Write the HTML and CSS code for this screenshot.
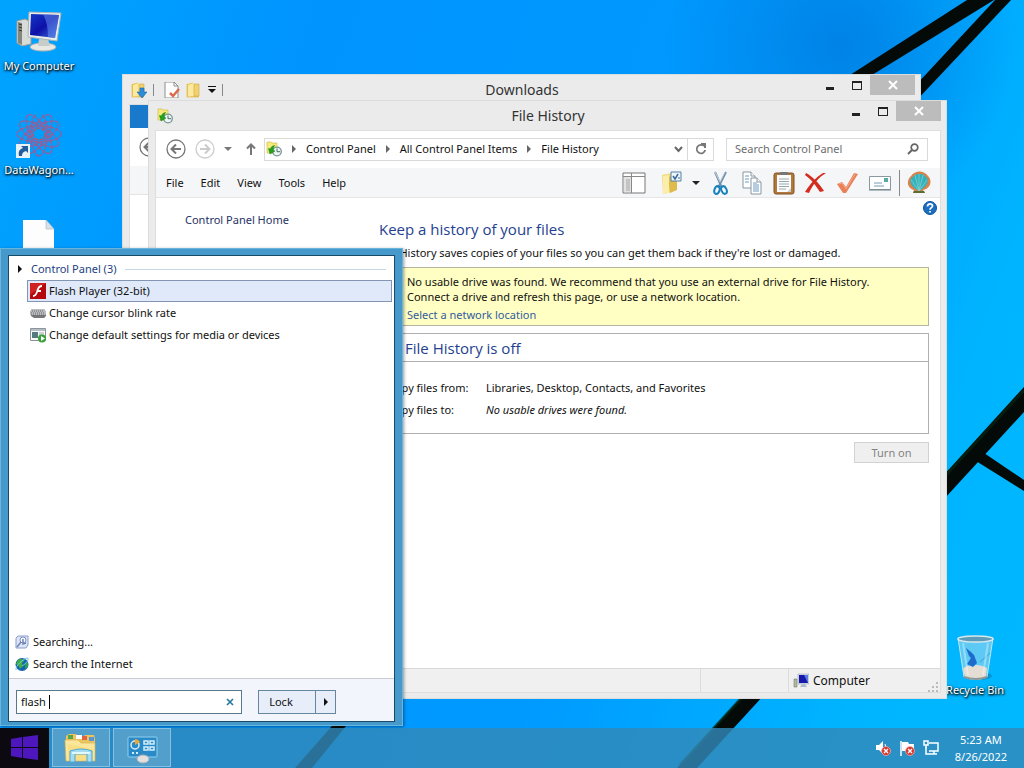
FILE: index.html
```html
<!DOCTYPE html>
<html lang="en">
<head>
    <meta charset="UTF-8">
    <meta name="viewport" content="width=device-width, initial-scale=1.0">
    <title>File History</title>
    <link rel="stylesheet" href="styles.css">
</head>
<body>

<svg class="defs" aria-hidden="true">
    <symbol id="ic-history" viewBox="0 0 16 16">
        <path d="M1 1h4l1 1h5v10H1z" fill="#f6ea7c" stroke="#d2bd45" stroke-width=".7"/>
        <circle cx="11" cy="10.500" r="4.300" fill="#edf4f4" stroke="#769794" stroke-width="1.300"/>
        <path d="M11 7.500v3.200h3" fill="none" stroke="#4c6a68"/>
        <path d="M8.500 4.500C6 5 5 6 4.500 8L2.500 7.500 4 13l5-3-2-.8C7 7.500 7.500 6 8.500 4.500z" fill="#22a51c" stroke="#0d7a10" stroke-width=".5"/>
    </symbol>
    <symbol id="ic-folder" viewBox="0 0 16 16">
        <path d="M1 2l6-1.500V2h6v13H1z" fill="#e8c456"/>
        <path d="M2 3l6-2v13l-6 1z" fill="#fbe9a0"/>
        <path d="M8 2h5v12H8z" fill="#f1d26f" stroke="#cda840" stroke-width=".6"/>
        <path d="M1 2v13h12" fill="none" stroke="#dcb84c" stroke-width=".7"/>
    </symbol>
    <symbol id="ic-back" viewBox="0 0 20 20">
        <circle cx="10" cy="10" r="9" fill="none" stroke="currentColor" stroke-width="1.300"/>
        <path d="M15 10H6M10 5.500L5.500 10l4.500 4.500" fill="none" stroke="currentColor" stroke-width="2"/>
    </symbol>
    <symbol id="ic-badx" viewBox="0 0 10 10">
        <circle cx="5" cy="5" r="4.500" fill="#d8372f" stroke="#f3b9b4" stroke-width=".7"/>
        <path d="M3 3l4 4M7 3L3 7" stroke="#fff" stroke-width="1.400"/>
    </symbol>
</svg>

<main class="desktop">
    <svg class="wallpaper" viewBox="0 0 1024 768" preserveAspectRatio="none" aria-hidden="true">
        <g fill="#030a08">
            <path d="M967 0h27L872 75h-22z"/>
            <path d="M995 0h16L915 102v-16z"/>
            <path d="M1024 387v25L697 768h-20z"/>
            <path d="M976 461l8-8 40 27v11z"/>
            <path d="M360 694h12L312 768h-17z"/>
        </g>
        <path d="M1024 390L680 765" stroke="#082712" stroke-width="3" opacity=".7"/>
    </svg>

    <!-- desktop icons -->
    <div class="shortcut my-computer">
        <svg width="48" height="48" viewBox="0 0 48 48">
            <path d="M2 11l8-2 6 3v22l-9 2-5-3z" fill="#d9dbd8" stroke="#9a9d9a"/>
            <path d="M3 12l4 1v22l-4-2z" fill="#85877f"/>
            <path d="M4 14l3 1M4 17l3 1M4 20l3 1" stroke="#37372d"/>
            <ellipse cx="28" cy="37" rx="13" ry="4" fill="#e8e9e5" stroke="#b3b6b0"/>
            <path d="M24 29h9l2 7H23z" fill="#c9cdc9"/>
            <path d="M14 2l32 1-4 28-29-4z" fill="#e9eee9" stroke="#a9b4b8"/>
            <path d="M16 4l28 1-4 23-25-3z" fill="url(#screen)"/>
            <path d="M28 4l16 1-4 23-7-1c0-8-1-15-5-23z" fill="#628dec" opacity=".55"/>
            <defs><linearGradient id="screen" x2="1" y2="1"><stop stop-color="#1539c8"/><stop offset=".5" stop-color="#0d10a8"/><stop offset="1" stop-color="#4178e3"/></linearGradient></defs>
        </svg>
        <span>My Computer</span>
    </div>
    <div class="shortcut datawagon">
        <svg width="48" height="48" viewBox="0 0 48 48">
            <g fill="none" stroke="#8c629f" stroke-width="1.500" stroke-dasharray="4 1" transform="translate(24 20)">
                <ellipse rx="22" ry="8"/><ellipse rx="22" ry="8" transform="rotate(30)"/>
                <ellipse rx="22" ry="8" transform="rotate(60)"/><ellipse rx="22" ry="8" transform="rotate(90)"/>
                <ellipse rx="22" ry="8" transform="rotate(120)"/><ellipse rx="22" ry="8" transform="rotate(150)"/>
                <circle r="12"/><circle r="6" stroke="#bb506f"/>
            </g>
            <path d="M1 30h14v14H1z" fill="#e9f2f8"/>
            <path d="M4 42c-1-5 1-7 4-8l-2-2h7v7l-2-2c-3 1-4 2-4 5z" fill="#215c9b"/>
        </svg>
        <span>DataWagon...</span>
    </div>
    <div class="shortcut blank-file">
        <svg width="48" height="48" viewBox="0 0 48 48">
            <path d="M8 3h23l8 9v36H8z" fill="#fdfdfd"/>
            <path d="M31 3v9h8z" fill="#d9e1e8" stroke="#a4b4c0" stroke-width=".6"/>
        </svg>
    </div>
    <div class="shortcut recycle">
        <svg width="48" height="48" viewBox="0 0 48 48">
            <ellipse cx="27" cy="42" rx="14" ry="4" fill="#16608c" opacity=".4"/>
            <path d="M7 4h35l-6 39q-11 5-23 0z" fill="#b8ddec" fill-opacity=".5" stroke="#c4e5ef"/>
            <path d="M12 35q3-4 9-3 6-3 15 2l-1 9q-11 4-21 0z" fill="#e3ddd3"/>
            <path d="M15 14l3 8 2 2-4 6 6 3 4-4-3-8-3-3z" fill="#1d6ccb"/>
            <path d="M29 28l10-9" stroke="#4b9cd1"/>
            <path d="M12 9l5 32M37 9l-5 32" stroke="#fff" opacity=".35" stroke-width="2"/>
            <ellipse cx="24.500" cy="5" rx="17.500" ry="3" fill="#5d9cb9" stroke="#d5e6ec" stroke-width="1.500"/>
            <path d="M13 43q12 4 23 0" fill="none" stroke="#8b989a" stroke-width="2"/>
        </svg>
        <span>Recycle Bin</span>
    </div>

    <!-- window behind -->
    <section class="window downloads">
        <header class="titlebar">
            <div class="quick">
                <svg width="16" height="16"><use href="#ic-folder"/><path d="M9 6h4v4h3l-5 6-5-6h3z" fill="#2e8bd6" stroke="#1769b0" stroke-width=".6"/></svg>
                <i class="sep"></i>
                <svg class="sheet" width="16" height="16" viewBox="0 0 16 16"><path d="M1 0h9l4 4v12H1z" fill="#fff" stroke="#8e8e8e"/><path d="M10 0v4h4" fill="none" stroke="#8e8e8e"/><path d="M6 11l3 3 6-7" fill="none" stroke="#dc6a4c" stroke-width="2.500"/></svg>
                <svg width="16" height="16"><use href="#ic-folder"/></svg>
                <svg width="8" height="8" viewBox="0 0 8 8"><path d="M0 0h8v1H0zM0 3h8L4 7z" fill="#111"/></svg>
                <i class="sep"></i>
            </div>
            <h2>Downloads</h2>
            <div class="controls">
                <button aria-label="Minimize"><i class="min"></i></button>
                <button aria-label="Maximize"><i class="max"></i></button>
                <button class="close" aria-label="Close"><svg width="10" height="10" viewBox="0 0 10 10"><path d="M1 1l8 8M9 1L1 9" stroke="#fff" stroke-width="2"/></svg></button>
            </div>
        </header>
        <div class="pane">
            <div class="ribbon-tab"></div>
            <div class="pane-nav"><svg width="20" height="20"><use href="#ic-back"/></svg></div>
            <div class="pane-tools"></div>
        </div>
    </section>

    <section class="window history">
        <header class="titlebar">
            <div class="quick"><svg width="16" height="16"><use href="#ic-history"/></svg></div>
            <h1>File History</h1>
            <div class="controls">
                <button aria-label="Minimize"><i class="min"></i></button>
                <button aria-label="Maximize"><i class="max"></i></button>
                <button class="close" aria-label="Close"><svg width="10" height="10" viewBox="0 0 10 10"><path d="M1 1l8 8M9 1L1 9" stroke="#fff" stroke-width="2"/></svg></button>
            </div>
        </header>
        <div class="pane">
            <nav class="address-row">
                <button class="nav-btn" aria-label="Back"><svg width="20" height="20"><use href="#ic-back"/></svg></button>
                <button class="nav-btn forward" aria-label="Forward"><svg width="20" height="20"><use href="#ic-back"/></svg></button>
                <button class="recent" aria-label="Recent pages"><i class="down"></i></button>
                <button class="up" aria-label="Up"><svg width="10" height="12" viewBox="0 0 10 12"><path d="M5 12V2M1 5.500L5 1.500l4 4" fill="none" stroke="#777" stroke-width="2"/></svg></button>
                <div class="address">
                    <svg width="16" height="16"><use href="#ic-history"/></svg>
                    <i class="right"></i><a href="#">Control Panel</a>
                    <i class="right"></i><a href="#">All Control Panel Items</a>
                    <i class="right"></i><a href="#">File History</a>
                    <button class="drop" aria-label="Previous locations"><svg width="9" height="7" viewBox="0 0 9 7"><path d="M1 1l3.500 4L8 1" fill="none" stroke="#666" stroke-width="2"/></svg></button>
                    <button class="refresh" aria-label="Refresh"><svg width="12" height="12" viewBox="0 0 12 12"><path d="M9 3a4.300 4.300 0 1 0 1.200 4" fill="none" stroke="#777" stroke-width="1.700"/><path d="M6 0h5v5H9V2H6z" fill="#777"/></svg></button>
                </div>
                <div class="search">
                    <input type="text" placeholder="Search Control Panel" aria-label="Search Control Panel">
                    <svg width="12" height="12" viewBox="0 0 12 12"><circle cx="7.500" cy="4.500" r="3.300" fill="none" stroke="#666" stroke-width="1.700"/><path d="M5 7l-4 4" stroke="#666" stroke-width="2"/></svg>
                </div>
            </nav>
            <div class="menu-row">
                <button>File</button><button>Edit</button><button>View</button><button>Tools</button><button>Help</button>
                <div class="tools">
                    <svg width="24" height="24" viewBox="0 0 24 24"><path d="M1 2h22v20H1z" fill="#fff" stroke="#777"/><path d="M1 5.500h22M9.500 2v20" stroke="#888"/><path d="M2 6h7v15H2z" fill="#e2e2e2"/><path d="M4 8h4v12H4z" fill="#c4c4c4"/></svg>
                    <svg class="props" width="24" height="24" viewBox="0 0 24 24"><path d="M2 4l10-2v19l-9 2z" fill="#f1d978"/><path d="M8 6l9-2v15l-7 3z" fill="#dfbb4b"/><path d="M3 5l6-1v18l-6 1z" fill="#fbedac"/><path d="M11 1h10v9H11z" fill="#edf6fc" stroke="#537fa4"/><path d="M13 5l2 3 3-5" fill="none" stroke="#386b9a" stroke-width="1.500"/><path d="M18 7h2" stroke="#386b9a"/></svg>
                    <i class="down dark"></i>
                    <svg class="cut" width="24" height="24" viewBox="0 0 24 24"><path d="M7 1l7 16M18 1l-8 16" stroke="#6f8fac" stroke-width="2"/><path d="M7 1l5 10 5-10" fill="none" stroke="#c1d0da"/><g fill="none" stroke="#1682bd" stroke-width="2"><ellipse cx="9" cy="19" rx="2.500" ry="4" transform="rotate(20 9 19)"/><ellipse cx="16" cy="19" rx="2.500" ry="4" transform="rotate(-25 16 19)"/></g></svg>
                    <svg width="24" height="24" viewBox="0 0 24 24"><g fill="#fff" stroke="#8797a0"><path d="M3 1h8l4 4v12H3z"/><path d="M11 1v4h4"/><path d="M11 7h6l4 4v12H11z"/><path d="M17 7v4h4"/></g><path d="M5 5h4M5 8h4M5 11h4M13 12h4M13 14h6M13 16h6M13 18h6M13 20h6" stroke="#6a9bc0"/></svg>
                    <svg width="24" height="24" viewBox="0 0 24 24"><rect x="2" y="2" width="20" height="21" rx="2" fill="#b3783b" stroke="#805225"/><path d="M5 4h14v17H5z" fill="#fdfdfb"/><path d="M8 1h8v3H8z" fill="#777"/><path d="M7 8h10M7 10.500h10M7 13h10M7 15.500h10M7 18h7" stroke="#95a8b4"/><path d="M15 21l4-4v4z" fill="#c7cfd2"/></svg>
                    <svg width="24" height="24" viewBox="0 0 24 24"><path d="M2 2c6 3 13 10 18 18l-4 1C12 15 7 8 1 4zM22 2C15 6 9 13 5 22l-4-1C6 13 12 6 19 2z" fill="#d52c20"/></svg>
                    <svg width="24" height="24" viewBox="0 0 24 24"><path d="M1 13l5-2 4 5L18 2l4 1-12 19H7z" fill="#ea8058"/><path d="M3 13l3-1 4 6L19 3" fill="none" stroke="#f6a78a"/></svg>
                    <svg width="24" height="24" viewBox="0 0 24 24"><path d="M1.500 5.500h21v13h-21z" fill="#fff" stroke="#8a989f"/><path d="M1 19h22" stroke="#71818a"/><path d="M16 7h4v4h-4z" fill="#58aaa5"/><path d="M6 12h8M6 15h10" stroke="#739ab7"/></svg>
                    <i class="sep"></i>
                    <svg width="24" height="24" viewBox="0 0 24 24"><path d="M7 19C0 17-1 10 4 5c4-6 13-6 17 0 5 5 2 13-5 14l2 3H6z" fill="#da8248"/><path d="M12 20C2 15 1 8 7 5c3-3 8-3 11 0 6 4 2 11-6 15z" fill="#35b1bd"/><path d="M12 20L4 9M12 20L8 4M12 20V3M12 20l4-16M12 20l8-11" stroke="#7fd0cb" stroke-width=".8"/><path d="M7 20h10l1 2H6z" fill="#5a6d34"/></svg>
                </div>
            </div>
            <div class="body">
                <aside><a href="#">Control Panel Home</a></aside>
                <article>
                    <h2>Keep a history of your files</h2>
                    <p>File History saves copies of your files so you can get them back if they're lost or damaged.</p>
                    <div class="notice">
                        <p>No usable drive was found. We recommend that you use an external drive for File History.<br>Connect a drive and refresh this page, or use a network location.</p>
                        <a href="#">Select a network location</a>
                    </div>
                    <div class="status">
                        <h3>File History is off</h3>
                        <dl>
                            <dt>Copy files from:</dt><dd>Libraries, Desktop, Contacts, and Favorites</dd>
                            <dt>Copy files to:</dt><dd><em>No usable drives were found.</em></dd>
                        </dl>
                    </div>
                    <button class="turn-on" disabled>Turn on</button>
                </article>
                <button class="help" aria-label="Help"><svg width="14" height="14" viewBox="0 0 14 14"><circle cx="7" cy="7" r="6.500" fill="#1b6fc0" stroke="#11529a"/><path d="M4.500 5.500C4.500 2 9.800 2.200 9.500 5.200 9.300 6.700 7 6.700 7 8.700M7 10v1.500" fill="none" stroke="#fff" stroke-width="1.700"/></svg></button>
            </div>
            <footer class="statusbar">
                <div class="cell"></div>
                <div class="cell small"></div>
                <div class="cell place">
                    <svg width="16" height="16" viewBox="0 0 16 16"><path d="M1 6h3v8H1z" fill="#afb99d" stroke="#77806b" stroke-width=".6"/><path d="M5 1h11v10H5z" fill="#d8deeb" stroke="#8d9ab0" stroke-width=".5"/><path d="M6 2h9v8H6z" fill="#1618aa"/><path d="M11 2h4v8z" fill="#587be3"/><path d="M9 11h3l2 3H7z" fill="#b0bbca"/></svg>
                    <span>Computer</span>
                    <svg class="grip" width="10" height="10" viewBox="0 0 10 10"><path d="M8 0h2v2H8zM4 4h2v2H4zM8 4h2v2H8zM0 8h2v2H0zM4 8h2v2H4zM8 8h2v2H8z" fill="#bbb"/></svg>
                </div>
            </footer>
        </div>
    </section>

    <!-- start menu search results -->
    <section class="start-menu">
        <div class="start-inner">
            <div class="results">
                <h2><i class="right"></i><span>Control Panel (3)</span></h2>
                <a href="#" class="result active">
                    <svg width="16" height="16" viewBox="0 0 16 16"><path d="M0 0h16v16H0z" fill="#b4080c"/><path d="M0 0h16L0 12z" fill="#e23330" opacity=".6"/><path d="M12 3C8 3 8 6 7 9s-2 4-4 4M7 8h4" fill="none" stroke="#fff" stroke-width="1.800"/></svg>
                    Flash Player (32-bit)</a>
                <a href="#" class="result">
                    <svg width="16" height="16" viewBox="0 0 16 16"><path d="M2 4h12l2 3v4l-2 2H4l-3-2-1-4z" fill="#77777b"/><path d="M2 4h12l2 3v2l-1 1H2L0 8V7z" fill="#bbbcc0"/><path d="M2 6h12M1 8h14M3 10h11" stroke="#66686e" stroke-dasharray="1 1"/></svg>
                    Change cursor blink rate</a>
                <a href="#" class="result">
                    <svg width="16" height="16" viewBox="0 0 16 16"><path d="M.5 1.500h15v12H.5z" fill="#f8f9f8" stroke="#8b9499"/><path d="M1 2h14v2H1z" fill="#b4bec4"/><path d="M2 5h6v6H2z" fill="#567a80"/><path d="M9 6h5M9 8h5" stroke="#9eaab0"/><circle cx="12" cy="11.500" r="4" fill="#39a039"/><path d="M11 9v5l4-2.500z" fill="#fff"/></svg>
                    Change default settings for media or devices</a>
            </div>
            <div class="more">
                <a href="#"><svg width="14" height="14" viewBox="0 0 14 14"><path d="M3 1h10v9l-2 3H1V3z" fill="#dce5f7" stroke="#8c9dc9"/><circle cx="8" cy="5" r="3" fill="#f5f8ff" stroke="#7d8fc0"/><path d="M6 7l-4 5M8 4v5l3-1" stroke="#7184b7" fill="none" stroke-width="1.500"/></svg>Searching...</a>
                <a href="#"><svg width="14" height="14" viewBox="0 0 14 14"><circle cx="7" cy="7.500" r="6.500" fill="#1761b6"/><path d="M3 3c3-2 6-1 6 1L7 6l1 3-3 3c-1-2-1-4-4-5z" fill="#40b13c"/><path d="M10 6l3-1v5l-3 2z" fill="#2d9e55"/><path d="M1 13C0 9 9 1 13 1c1 3-4 7-6 8" fill="none" stroke="#75c5ed"/></svg>Search the Internet</a>
            </div>
            <div class="start-foot">
                <div class="query">
                    <input type="text" value="flash " aria-label="Search programs and files">
                    <i class="caret"></i>
                    <button aria-label="Clear search"><svg width="8" height="8" viewBox="0 0 8 8"><path d="M1 1l6 6M7 1L1 7" stroke="#287aa2" stroke-width="1.700"/></svg></button>
                </div>
                <div class="lock">
                    <button>Lock</button><button class="lock-more" aria-label="More options"><i class="right"></i></button>
                </div>
            </div>
        </div>
    </section>

    <footer class="taskbar">
        <button class="start" aria-label="Start"><svg width="28" height="26" viewBox="0 0 28 26"><path d="M0 4l11-2v10H0zM12 2l15-2v12H12zM0 13h11v10L0 21zM12 13h15v12l-15-2z" fill="#4d17bd"/></svg></button>
        <button class="task" aria-label="File Explorer">
            <svg width="34" height="32" viewBox="0 0 34 32"><path d="M2 4l3-2h7l2 3h5l2-2h9l1 4v21H2z" fill="#edc45c"/><path d="M4 3h5v4H4z" fill="#56a650"/><path d="M12 3h6v4h-6z" fill="#fff"/><path d="M18 4h5v4h-5z" fill="#df6541"/><path d="M25 5h5v4h-5z" fill="#5896d2"/><path d="M1 8h13l3 3h14v18H2z" fill="#fbe79c" stroke="#dab656" stroke-width=".7"/><path d="M4 12l25 5v11H4z" fill="#f6d977" opacity=".6"/><path d="M6 30V19q11-4 22 0v11h-5v-8H11v8z" fill="#a6dcf2" stroke="#4aa9d3"/><path d="M8 21h18" stroke="#e3f7ff" stroke-width="2"/></svg>
        </button>
        <button class="task" aria-label="Control Panel">
            <svg width="34" height="32" viewBox="0 0 34 32"><rect x="3" y="5" width="29" height="20" rx="1" fill="#2a8ac7" stroke="#8dd0ef"/><circle cx="10" cy="13" r="4" fill="none" stroke="#d4effa" stroke-width="1.500"/><path d="M10 13V7a6 6 0 0 1 5 3z" fill="#f4a62c"/><g fill="none" stroke="#d4effa" stroke-width="1.500"><path d="M19 9h4v3h-4zM25 9h4v3h-4zM19 15h4v3h-4zM25 15h4v3h-4z"/></g><path d="M7 21h2M11 21h2" stroke="#d4effa" stroke-width="2"/><ellipse cx="18" cy="27" rx="6" ry="4" fill="#e2e0df" stroke="#a8aeb4"/></svg>
        </button>
        <div class="tray">
            <svg width="16" height="16" viewBox="0 0 16 16"><path d="M1 5h3l4-4v13l-4-4H1z" fill="#fff"/><path d="M10 4q2 3 0 7" stroke="#fff" fill="none"/><use href="#ic-badx" x="6" y="6" width="10" height="10"/></svg>
            <svg width="16" height="16" viewBox="0 0 16 16"><path d="M2 1v15" stroke="#fff" stroke-width="1.500"/><path d="M3 2h6l1 2h5v7H3z" fill="#fff"/><use href="#ic-badx" x="6" y="6" width="10" height="10"/></svg>
            <svg width="16" height="16" viewBox="0 0 16 16"><path d="M6 3h9v8H6M8 14h6M11 11v3M3 7v7h5" fill="none" stroke="#fff" stroke-width="1.500"/><path d="M1 1h4v4H1zM3 5v3" fill="none" stroke="#fff" stroke-width="1.500"/></svg>
            <div class="clock"><span>5:23 AM</span><span>8/26/2022</span></div>
        </div>
    </footer>
</main>

</body>
</html>
```
FILE: styles.css
```css
* {
    box-sizing: border-box;
}

body {
    margin: 0;
    font-family: "Noto Sans", "Open Sans", sans-serif;
    font-size: 11px;
    line-height: 16px;
    color: #111;
}

h1, h2, h3, p, dl, dd {
    margin: 0;
    font-weight: normal;
}

a {
    color: inherit;
    text-decoration: none;
}

button, input {
    font: inherit;
    color: inherit;
    padding: 0;
    border: none;
    background: none;
}

svg {
    display: block;
    flex: none;
}

.defs {
    position: absolute;
    width: 0;
    height: 0;
}

.desktop {
    position: relative;
    min-height: 100vh;
    overflow: hidden;
    background:
        radial-gradient(circle at 82% 6%, #0082e6 0, transparent 16%),
        linear-gradient(110deg, #00a4ff 0, #0094ff 25%, #009aff 60%, #00b4ff 85%, #00b9ff 100%);
}

.wallpaper {
    position: absolute;
    width: 100%;
    height: 100%;
}

/* desktop shortcuts */
.shortcut {
    position: absolute;
    width: 78px;
    display: flex;
    flex-direction: column;
    align-items: center;
    color: #fff;
    text-shadow: 1px 1px 2px #000, 0 1px 3px #000;
}

.my-computer { left: 0; top: 10px; }
.datawagon { left: 0; top: 114px; }
.blank-file { left: 0; top: 217px; }
.recycle { right: 10px; bottom: 70px; }

/* windows */
.window {
    position: absolute;
    display: flex;
    flex-direction: column;
    background: #ebebeb;
    border: 1px solid #dcdcdc;
    padding: 0 5px 5px 6px;
}

.downloads {
    left: 122px;
    right: 103px;
    top: 74px;
    bottom: 95px;
}

.history {
    left: 148px;
    right: 77px;
    top: 100px;
    bottom: 69px;
}

.titlebar {
    display: grid;
    grid-template-columns: 1fr auto 1fr;
    height: 29px;
}

.titlebar h1, .titlebar h2 {
    font-size: 14px;
    line-height: 29px;
    color: #333;
}

.quick {
    display: flex;
    align-items: center;
    gap: 6px;
    padding-left: 2px;
}

.quick .sheet {
    margin-left: 4px;
}

.sep {
    width: 1px;
    height: 12px;
    background: #888;
}

.controls {
    display: flex;
    justify-content: flex-end;
    align-items: flex-start;
}

.controls button {
    width: 27px;
    height: 20px;
    display: grid;
    place-items: center;
}

.controls .close {
    width: 45px;
    background: #bcbcbc;
}

.min {
    width: 8px;
    height: 3px;
    margin-top: 6px;
    background: #222;
}

.max {
    width: 10px;
    height: 9px;
    border: 1px solid #222;
    border-top-width: 2px;
}

.pane {
    flex: 1;
    display: flex;
    flex-direction: column;
    background: #fff;
    border: 1px solid #dedede;
}

.ribbon-tab {
    width: 60px;
    height: 23px;
    background: #1979ca;
}

.pane-nav {
    padding: 9px;
    color: #777;
}

.pane-tools {
    height: 29px;
    background: #f5f6f7;
    border-bottom: 1px solid #e4e4e4;
}

/* address bar */
.address-row {
    display: flex;
    align-items: center;
    height: 37px;
    padding: 0 12px 1px 10px;
}

.nav-btn {
    color: #777;
    margin-right: 9px;
}

.forward {
    color: #ccc;
    transform: scaleX(-1);
}

.down {
    display: block;
    border: 4px solid transparent;
    border-top-color: #777;
    border-bottom: 0;
}

.down.dark {
    border-top-color: #222;
}

.up {
    margin: 0 8px 0 14px;
}

.right {
    display: block;
    border: 4px solid transparent;
    border-left-color: #666;
    border-right: 0;
}

.address {
    flex: 1;
    display: flex;
    align-items: center;
    gap: 10px;
    height: 23px;
    padding-left: 1px;
    border: 1px solid #d9d9d9;
}

.address a {
    white-space: nowrap;
}

.drop {
    margin-left: auto;
    margin-right: -6px;
}

.refresh {
    width: 26px;
    height: 21px;
    display: grid;
    place-items: center;
    border-left: 1px solid #d9d9d9;
}

.search {
    width: 202px;
    height: 23px;
    margin-left: 12px;
    padding: 0 8px;
    display: flex;
    align-items: center;
    border: 1px solid #d9d9d9;
}

.search input {
    flex: 1;
    min-width: 0;
    outline: none;
}

.search input::placeholder {
    color: #6d6d6d;
}

.menu-row {
    display: flex;
    align-items: center;
    gap: 17px;
    height: 30px;
    padding: 0 9px 0 10px;
    background: #f5f6f7;
    border-bottom: 1px solid #e6e6e6;
}

.tools {
    margin-left: auto;
    display: flex;
    align-items: center;
    gap: 8px;
}

.tools .props {
    margin-left: 6px;
}

.tools .sep {
    height: 26px;
    margin: 0 -1px;
}

/* control panel page */
.body {
    position: relative;
    flex: 1;
    display: flex;
    padding: 0 11px 0 29px;
}

aside {
    width: 194px;
    padding-top: 14px;
    color: #1e3264;
}

article {
    flex: 1;
    padding-top: 20px;
}

article h2, article h3 {
    font-family: "Open Sans", "Noto Sans", sans-serif;
    font-size: 15px;
    line-height: 22px;
    color: #243f8f;
}

article > p {
    margin-top: 5px;
}

.notice {
    margin-top: 6px;
    padding: 6px 12px 0 27px;
    background: #ffffc4;
    border: 1px solid #b4b4a0;
}

.notice p {
    line-height: 15px;
}

.notice a {
    display: block;
    margin-top: 1px;
    line-height: 20px;
    color: #335c9e;
}

.status {
    margin-top: 7px;
    border: 1px solid #b0b0b0;
}

.status h3 {
    padding: 3px 25px 2px;
    border-bottom: 1px solid #b0b0b0;
}

.status dl {
    display: grid;
    grid-template-columns: 98px 1fr;
    line-height: 22px;
    padding: 15px 10px 12px 8px;
}

.turn-on {
    display: block;
    width: 75px;
    height: 21px;
    margin: 8px 0 0 auto;
    background: #efefef;
    border: 1px solid #d2d2d2;
    color: #838383;
}

.help {
    position: absolute;
    top: 3px;
    right: 3px;
}

.statusbar {
    display: flex;
    height: 24px;
    background: #f0f0f0;
    border-top: 1px solid #d9d9d9;
}

.cell {
    flex: 1;
    display: flex;
    align-items: center;
    border-right: 1px solid #dcdcdc;
}

.cell.small {
    flex: none;
    width: 88px;
}

.cell.place {
    flex: none;
    width: 151px;
    gap: 4px;
    padding-left: 4px;
    border-right: 0;
    font-size: 12px;
}

.grip {
    margin-left: auto;
    margin-right: 2px;
    align-self: flex-end;
}

/* start menu */
.start-menu {
    position: absolute;
    left: 0;
    top: 248px;
    bottom: 42px;
    width: 403px;
    padding: 6px 7px 3px;
    display: flex;
    background: #459acb;
    border: 1px solid #68b6de;
    box-shadow: 1px 1px 3px rgba(0, 0, 0, .4);
}

.start-inner {
    flex: 1;
    display: flex;
    flex-direction: column;
    background: #fff;
    border: 1px solid #184a68;
}

.results {
    padding: 2px 2px 0 9px;
}

.results h2 {
    display: flex;
    align-items: center;
    gap: 9px;
    height: 22px;
    font-size: 11px;
    color: #243f7f;
}

.results h2::after {
    content: "";
    flex: 1;
    height: 1px;
    margin-right: 6px;
    background: #c8d7e5;
}

.results .right, .lock .right {
    border-left-color: #111;
}

.result {
    display: flex;
    align-items: center;
    gap: 3px;
    height: 22px;
    margin-left: 9px;
    padding-left: 2px;
    border: 1px solid transparent;
}

.result.active {
    background: #dfe9fa;
    border-color: #8495b4;
}

.more {
    margin-top: auto;
    padding: 0 6px 3px;
}

.more a {
    display: flex;
    align-items: center;
    gap: 4px;
    height: 22px;
}

.start-foot {
    display: flex;
    gap: 16px;
    height: 43px;
    padding: 11px 7px 0;
    background: #f2f5fc;
    border-top: 1px solid #c9cbd0;
}

.query {
    position: relative;
    width: 226px;
    height: 24px;
    display: flex;
    align-items: center;
    padding: 0 7px 0 4px;
    background: #fff;
    border: 1px solid #58788b;
}

.query input {
    flex: 1;
    min-width: 0;
    outline: none;
}

.caret {
    position: absolute;
    left: 32px;
    top: 4px;
    width: 1px;
    height: 14px;
    background: #000;
}

.lock {
    display: flex;
    width: 78px;
    height: 24px;
    background: #e8eef9;
    border: 1px solid #65869f;
}

.lock button {
    flex: 1;
    padding-right: 12px;
}

.lock .lock-more {
    flex: none;
    width: 20px;
    padding: 0;
    display: grid;
    place-items: center;
    border-left: 1px solid #65869f;
}

/* taskbar */
.taskbar {
    position: absolute;
    left: 0;
    right: 0;
    bottom: 0;
    height: 40px;
    display: flex;
    gap: 3px;
    background: rgba(50, 137, 184, .82);
}

.start {
    width: 49px;
    display: grid;
    place-items: center;
    background: #0c0a10;
}

.task {
    width: 58px;
    height: 39px;
    display: grid;
    place-items: center;
    background: #529fcc;
    border: 1px solid #86bfdf;
}

.tray {
    margin-left: auto;
    display: flex;
    align-items: center;
    gap: 8px;
    padding-right: 17px;
    color: #fff;
}

.clock {
    display: flex;
    flex-direction: column;
    align-items: center;
    margin-left: 8px;
    line-height: 17px;
}
```
